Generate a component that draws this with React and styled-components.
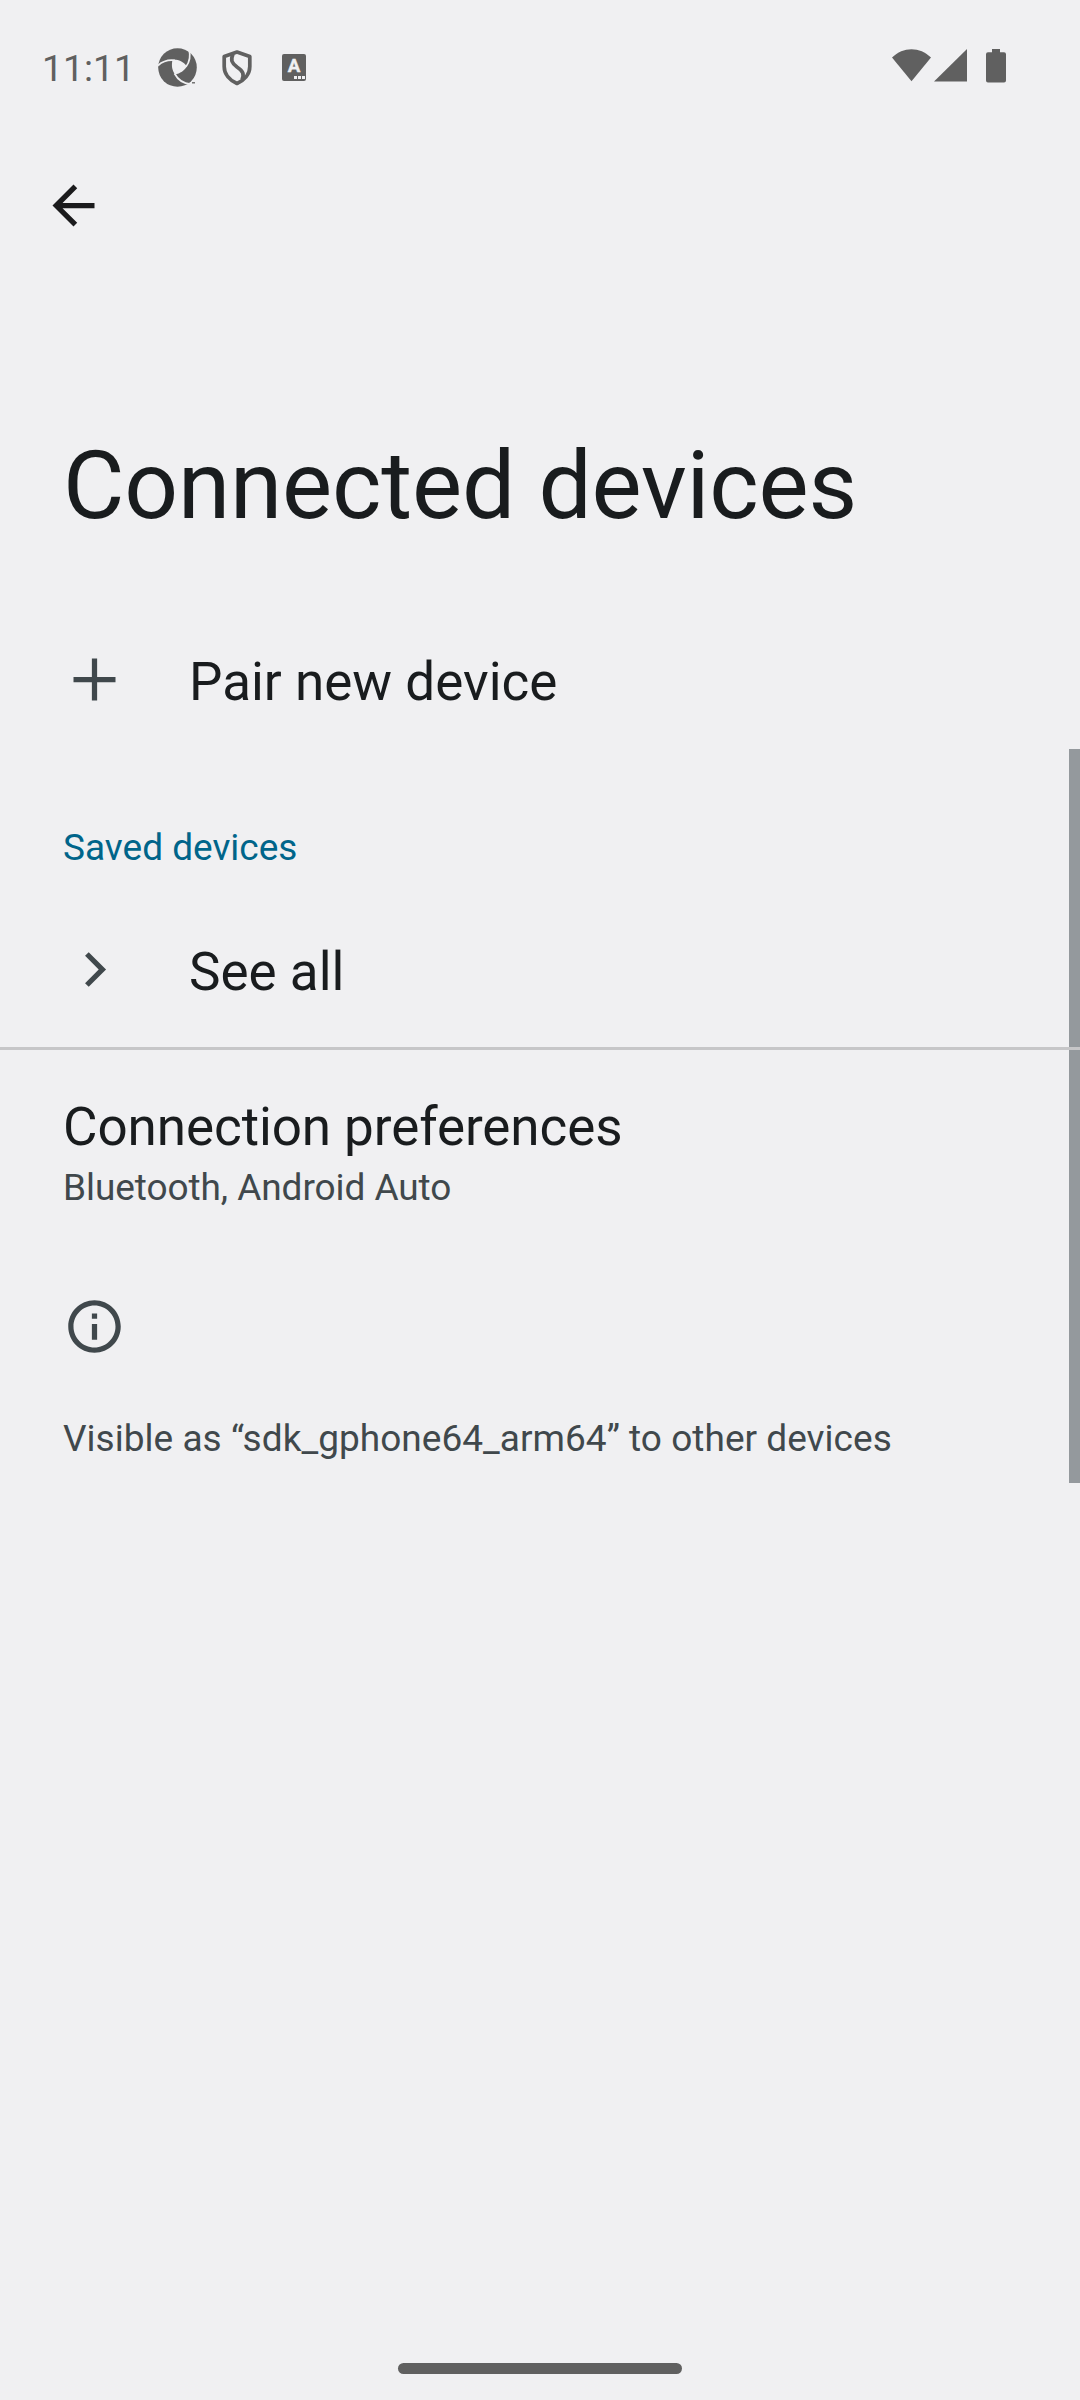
import React from "react";
import styled, { createGlobalStyle } from "styled-components";

const Global = createGlobalStyle`
  body { margin: 0; background: #f0f0f2; }
  * { box-sizing: border-box; }
`;
const Screen = styled.div`
  position: relative;
  width: 1080px;
  height: 2400px;
  display: flex;
  flex-direction: column;
  background: #f0f0f2;
  color: #191c1e;
  font-family: Roboto, "Liberation Sans", sans-serif;
  overflow: hidden;
`;
const StatusBar = styled.header`
  height: 136px;
  display: flex;
  align-items: center;
  padding: 0 74px 0 42px;
  color: #606060;
  svg { display: block; }
`;
const Clock = styled.span`
  font-size: 37.3px;
  line-height: 44px;
  width: 115px;
`;
const Notifications = styled.div`
  display: flex;
  align-items: center;
  gap: 23.5px;
`;
const SystemIcons = styled.div`
  display: flex;
  align-items: center;
  margin-left: auto;
  margin-bottom: 4px;
`;
const AppBar = styled.div`
  height: 138px;
  padding: 38px 42px;
`;
const Title = styled.h1`
  margin: 151px 0 0;
  padding-left: 63px;
  font-size: 94.5px;
  line-height: 121px;
  font-weight: 400;
  letter-spacing: -0.17px;
`;
const Row = styled.div`
  height: ${(p) => p.$h}px;
  margin-top: ${(p) => p.$mt || 0}px;
  padding-left: 63px;
  display: flex;
  align-items: center;
`;
const IconSlot = styled.div`
  width: 126px;
  svg { display: block; }
`;
const Label = styled.div`
  font-size: 53px;
  line-height: 62px;
  letter-spacing: ${(p) => p.$tracking || 0}px;
`;
const RowLabel = styled(Label)`
  padding-top: 5px;
`;
const Note = styled.div`
  font-size: 37px;
  line-height: 43px;
  letter-spacing: ${(p) => p.$tracking || 0}px;
  color: ${(p) => p.$color || "#40484c"};
`;
const Summary = styled(Note)`
  margin-top: 8px;
`;
const Block = styled.div`
  padding-left: 63px;
  padding-top: ${(p) => p.$pt}px;
  svg { display: block; }
`;
const Divider = styled.div`
  position: relative;
  z-index: 1;
  height: 3px;
  background: #c6c6c8;
`;
const ScrollThumb = styled.div`
  position: absolute;
  right: 0;
  top: 749px;
  width: 11px;
  height: 734px;
  background: #94999d;
`;
const HomeBar = styled.div`
  width: 284px;
  height: 11px;
  border-radius: 6px;
  background: #606060;
  margin: auto auto 26px;
`;
const Icon = ({ size = 63, d, color = "#40484c" }) => (
  <svg width={size} height={size} viewBox="0 0 24 24" fill={color}><path d={d} /></svg>
);

const ApertureIcon = () => (
  <svg width="41" height="42" viewBox="0 0 41 42">
    <circle cx="20.500" cy="20.500" r="19.300" fill="currentColor" />
    <path d="M15.500 13C20 12.300 26 14 29.800 19.500C27.500 23.500 23 26.500 18 27.500C14.800 23 14.300 18 15.500 13z" fill="#f0f0f2" />
    <g fill="none" stroke="#f0f0f2" strokeWidth="1.700">
      <path d="M1 18.500C6 14 12 12.600 18 13.400" />
      <path d="M29 19.800C32.500 15 33.800 9 32 2.500" />
      <path d="M17.500 26.500C20.500 32 25 36.500 33.500 37" />
    </g>
    <path d="M35 35.800h3" stroke="currentColor" strokeWidth="1.300" />
  </svg>
);
const ShieldIcon = () => (
  <svg width="30" height="36" viewBox="0 0 30 36" fill="none" stroke="currentColor" strokeWidth="3.700" strokeLinejoin="round">
    <path d="M15 2L27.800 6.500V16.500C27.800 24.500 22 30.500 15 33.500C8 30.500 2.200 24.500 2.200 16.500V6.500z" />
    <path d="M11 4C8.500 10 9.500 13 15 17C21 21 22.500 24 20 30" />
  </svg>
);
const LetterBadge = styled.span`
  position: relative;
  display: flex;
  justify-content: center;
  width: 24px;
  height: 27px;
  margin: 0 0 1px 7px;
  border-radius: 2px;
  background: #606060;
  color: #f0f0f2;
  font-size: 18.7px;
  line-height: 25px;
  font-weight: 700;
  -webkit-text-stroke: 0.4px #f0f0f2;
`;
const Dots = styled.span`
  position: absolute;
  right: 1.5px;
  bottom: 2px;
  display: flex;
  gap: 1px;
  i { width: 2.7px; height: 2.7px; background: #f0f0f2; }
`;

export default function App() {
  return (
    <Screen>
      <Global />
      <StatusBar>
        <Clock>11:11</Clock>
        <Notifications>
          <ApertureIcon />
          <ShieldIcon />
          <LetterBadge>A<Dots><i /><i /><i /></Dots></LetterBadge>
        </Notifications>
        <SystemIcons>
          <svg width="114" height="34" viewBox="0 0 114 34" fill="currentColor">
            <path d="M0 8.500C11 -2.600 28 -2.600 39 8.500L19.500 32.300z" />
            <path d="M42 32.500L75 0V32.500z" />
            <path d="M100 0h8v3.300h4a2 2 0 0 1 2 2V31.500a2 2 0 0 1-2 2H96a2 2 0 0 1-2-2V5.300a2 2 0 0 1 2-2h4z" />
          </svg>
        </SystemIcons>
      </StatusBar>
      <AppBar><Icon color="#1b1b1d" d="M20 11H7.83l5.59-5.59L12 4l-8 8 8 8 1.41-1.41L7.83 13H20v-2z" /></AppBar>
      <Title>Connected devices</Title>
      <Row $h={159} $mt={54}>
        <IconSlot><Icon d="M20 13h-7v7h-2v-7H4v-2h7V4h2v7h7v2z" /></IconSlot>
        <RowLabel>Pair new device</RowLabel>
      </Row>
      <Block $pt={67}><Note $color="#00658a">Saved devices</Note></Block>
      <Row $h={155} $mt={23}>
        <IconSlot><Icon d="M9.800 5.400L8.400 6.800L13.600 12L8.400 17.200L9.800 18.600L16.400 12z" /></IconSlot>
        <RowLabel>See all</RowLabel>
      </Row>
      <Divider />
      <Block $pt={46}>
        <Label $tracking={-0.08}>Connection preferences</Label>
        <Summary $tracking={-0.07}>Bluetooth, Android Auto</Summary>
      </Block>
      <Block $pt={86}><Icon d="M11 7h2v2h-2zm0 4h2v6h-2zm1-9C6.480 2 2 6.480 2 12s4.480 10 10 10 10-4.480 10-10S17.520 2 12 2zm0 18c-4.410 0-8-3.590-8-8s3.590-8 8-8 8 3.590 8 8-3.590 8-8 8z" /></Block>
      <Block $pt={59}><Note $tracking={0.03}>Visible as “sdk_gphone64_arm64” to other devices</Note></Block>
      <HomeBar />
      <ScrollThumb />
    </Screen>
  );
}
